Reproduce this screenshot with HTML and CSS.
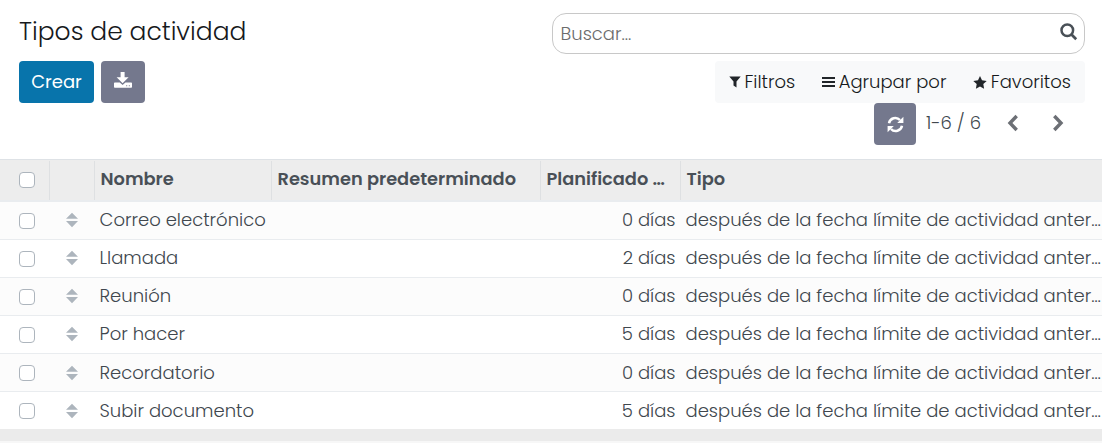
FILE: index.html
```html
<!DOCTYPE html>
<html lang="es">
<head>
<meta charset="utf-8">
<title>Tipos de actividad</title>
<link rel="stylesheet" href="styles.css">
</head>
<body>
<header class="panel">
  <div class="left">
    <h1>Tipos de actividad</h1>
    <div class="buttons">
      <button class="btn primary">Crear</button>
      <button class="btn secondary" aria-label="Exportar"><svg class="i-download" width="18" height="17" viewBox="0 0 18 17"><path fill="#fff" d="M6.600 0h4v5.200h4L8.600 11.300 2.600 5.200h4zM.8 10.400h5l2.800 2.500 2.800-2.500h5.800q.8 0 .8.800v3.800q0 .8-.8.800H.8q-.8 0-.8-.8v-3.800q0-.8.8-.8z"/><path fill="#74788d" d="M12.200 13.300h1v1h-1zM14.800 13.300h1v1h-1z"/></svg></button>
    </div>
  </div>
  <div class="right">
    <div class="search"><span>Buscar...</span><svg width="18" height="18" viewBox="0 0 18 18"><circle cx="7.300" cy="7.300" r="5.800" fill="none" stroke="#495057" stroke-width="2.500"/><path d="M11.500 11.500l4.700 4.700" stroke="#495057" stroke-width="2.700"/></svg></div>
    <div class="filters">
      <span class="f"><svg width="12" height="12" viewBox="0 0 12 12"><path fill="#212529" d="M.3.5h11.400L7.500 5.400v6.200L4.500 9.400v-4z"/></svg><span>Filtros</span></span>
      <span class="f"><svg width="13" height="12" viewBox="0 0 13 12"><path fill="#212529" d="M0 1h13v2H0zM0 5h13v2H0zM0 9h13v2H0z"/></svg><span>Agrupar por</span></span>
      <span class="f"><svg width="14" height="13" viewBox="0 0 14 13"><path fill="#212529" d="M7 0l2 4.300 4.700.6-3.400 3.200.8 4.700L7 10.500l-4.100 2.300.8-4.700L.3 4.900 5 4.300z"/></svg><span>Favoritos</span></span>
    </div>
    <div class="pager">
      <button class="btn secondary refresh" aria-label="Actualizar"><svg width="17" height="17" viewBox="0 0 17 17"><g fill="none" stroke="#fff" stroke-width="2.500"><path d="M2 7.200A6.400 6.400 0 0 1 13 4M15 9.800A6.400 6.400 0 0 1 4 13"/></g><path fill="#fff" d="M16.400.800v6.200h-6.200zM.6 16.200V10h6.200z"/></svg></button>
      <span class="count">1-6 / 6</span>
      <svg class="prev" width="12" height="18" viewBox="0 0 12 18"><path d="M9.700 2L3 9l6.700 7" fill="none" stroke="#6c6f75" stroke-width="3.400"/></svg>
      <svg class="next" width="12" height="18" viewBox="0 0 12 18"><path d="M2.300 2L9 9l-6.700 7" fill="none" stroke="#6c6f75" stroke-width="3.400"/></svg>
    </div>
  </div>
</header>
<main id="list" class="list">
  <div class="row head"><div class="c"><i class="box"></i></div><div class="c"></div><div class="c"><span>Nombre</span></div><div class="c"><span>Resumen predeterminado</span></div><div class="c"><span>Planificado …</span></div><div class="c"><span>Tipo</span></div></div>
</main>
<div class="foot"></div>
<script src="list.js"></script>
</body>
</html>
```
FILE: styles.css
```css
* { box-sizing: border-box; }
body { margin: 0; width: 1102px; height: 443px; overflow: hidden; background: #f7f7f7; color: #40474e; font: 300 18px/24px Poppins, Inter, "Open Sans", sans-serif; }
span { white-space: pre; display: inline-block; }
svg { display: block; flex: none; }
.panel { display: flex; justify-content: space-between; height: 159px; padding: 13px 17px 0 19px; background: #fff; }
h1 { margin: 0; height: 48px; font-size: 25px; line-height: 38px; font-weight: 300; color: #16191c; }
.buttons { display: flex; gap: 7px; }
.btn { border: 0; padding: 0; height: 42px; border-radius: 4px; color: #fff; font: inherit; font-weight: 400; display: flex; align-items: center; justify-content: center; }
.primary { width: 75px; background: #0874ab; }
.secondary { width: 44px; background: #74788d; }
.secondary .i-download { margin-top: -3px; }
.refresh { width: 42px; }
.right { width: 533px; }
.search { height: 41px; border: 1px solid #c8c8c8; border-radius: 14px; display: flex; justify-content: space-between; padding: 8px 6px 0 7.500px; color: #6c6c6c; }
.search svg { margin-top: 1px; }
.filters { width: 370px; height: 42px; margin: 7px 0 0 auto; background: #f8f9fa; border-radius: 4px; color: #16191c; display: flex; align-items: center; justify-content: space-between; padding: 0 14px; }
.f { display: flex; align-items: center; gap: 3.500px; }
.pager { display: flex; align-items: center; margin-left: 322px; }
.count { margin: -2px 0 0 10px; width: 57px; }
.prev { margin: -2px 0 0 24px; }
.next { margin: -2px 0 0 33px; }
.row { display: grid; grid-template-columns: 50px 45px 177px 269px 140px 421px; height: 38px; border-bottom: 1px solid #e9ecef; background: #fff; }
.row:nth-child(even) { background: #fcfcfc; }
.c { display: flex; align-items: center; padding-left: 4.500px; }
.c span, .c svg { margin-top: -2px; }
.row:nth-child(n+6) span, .row:nth-child(n+6) svg { margin-top: 0; }
.c:first-child { padding-left: 19px; }
.c:nth-child(2) { padding-left: 16px; }
.c:nth-child(5) { justify-content: flex-end; padding-right: 5.500px; }
.c:nth-child(6) { padding-left: 4.500px; }
.row.head { height: 43px; border-top: 1px solid #dee2e6; border-bottom: 2px solid #e9ecef; background: #ededed; color: #495057; font-weight: 600; font-size: 17.800px; }
.head .c { border-right: 1px solid #dee0e2; padding-left: 5.500px; padding-right: 0; justify-content: flex-start; margin-top: 1px; }
.head .c span { margin-top: -4px; }
.head .box { margin-top: -1px; }
.head .c:first-child { padding-left: 19px; }
.head .c:last-child { border-right: 0; }
.box { width: 16px; height: 16px; border: 1px solid #adb5bd; border-radius: 4px; background: #fff; }
.foot { height: 11px; background: #ebebeb; }
.row:last-child { border-bottom-color: #ebebeb; }
```
FILE: list.js
```js
const rows = [
  ["Correo electrónico", 0],
  ["Llamada", 2],
  ["Reunión", 0],
  ["Por hacer", 5],
  ["Recordatorio", 0],
  ["Subir documento", 5],
];
const list = document.getElementById("list");
for (const [name, days] of rows) {
  list.insertAdjacentHTML("beforeend", `<div class="row"><div class="c"><i class="box"></i></div><div class="c"><svg width="12" height="16" viewBox="0 0 12 16"><path fill="#adb5bd" d="M0 6.800L6 .7l6 6.100zM0 9h12L6 15.200z"/></svg></div><div class="c"><span>${name}</span></div><div class="c"></div><div class="c"><span>${days} días</span></div><div class="c"><span>después de la fecha límite de actividad anter…</span></div></div>`);
}
```
